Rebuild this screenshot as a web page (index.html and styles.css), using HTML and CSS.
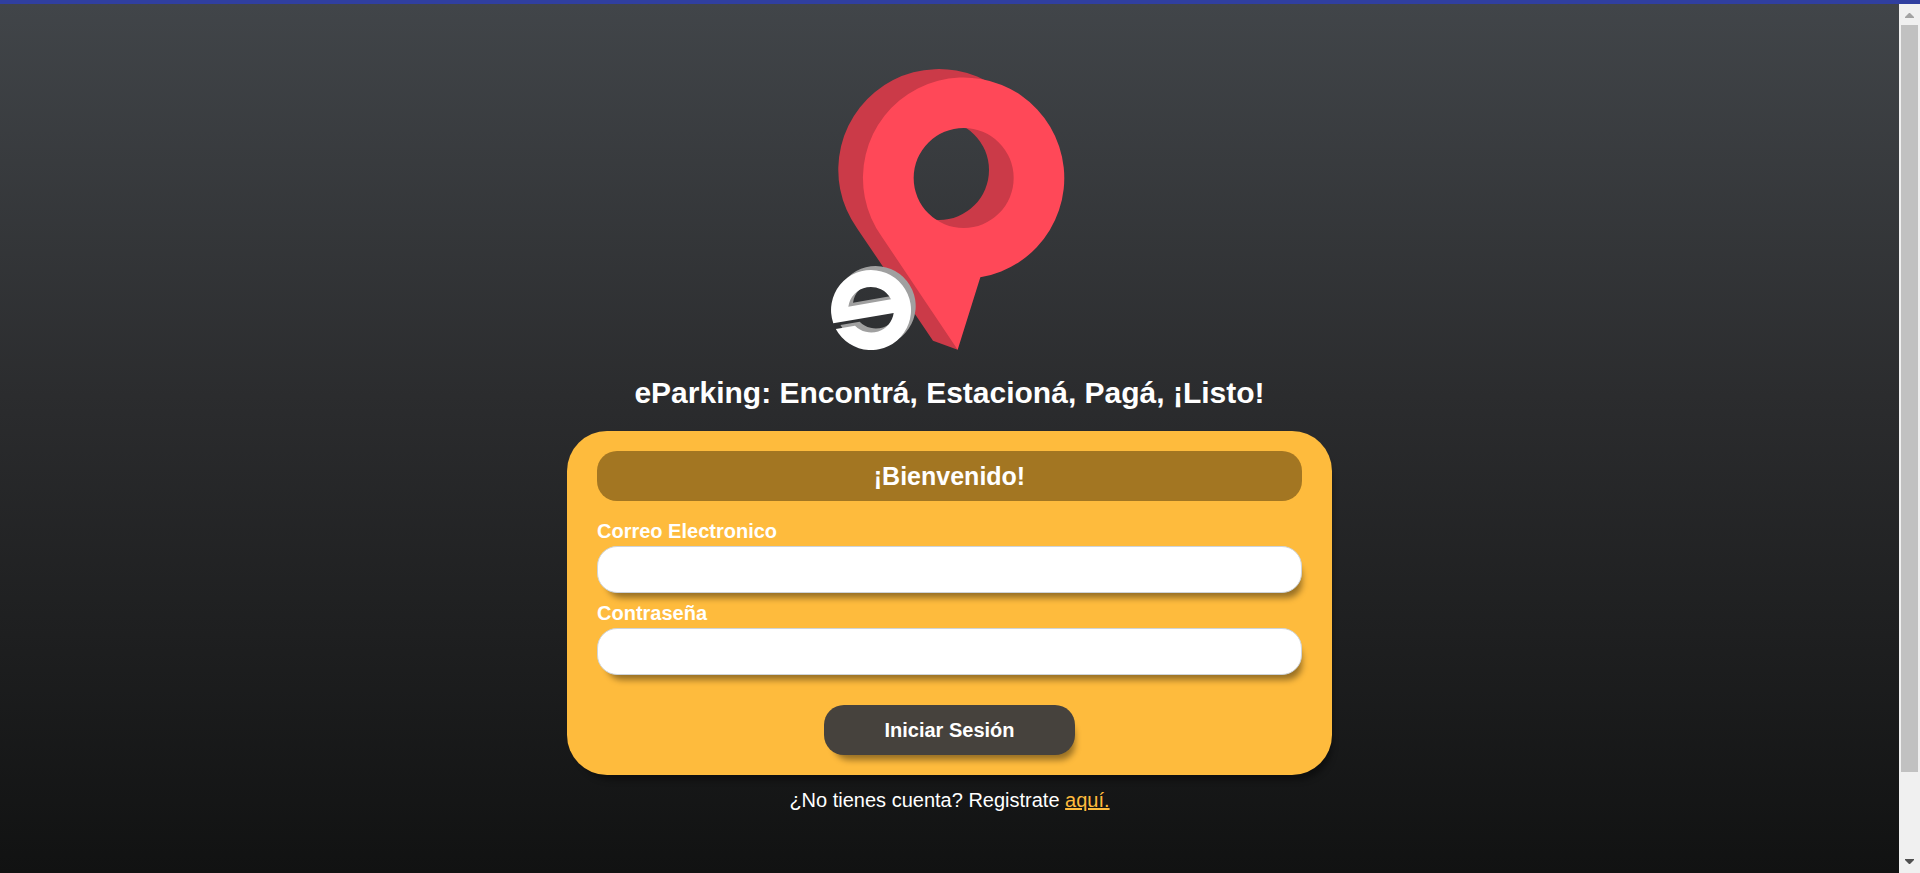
FILE: index.html
```html
<!DOCTYPE html>
<html lang="es">
<head>
<meta charset="utf-8">
<meta name="viewport" content="width=device-width, initial-scale=1">
<title>eParking</title>
<link rel="stylesheet" href="styles.css">
</head>
<body>
<div class="viewport">
  <main class="page">
    <svg class="logo" viewBox="33 27 711 843" role="img" aria-label="eParking">
      <path fill="#cb3a48" fill-rule="evenodd" d="M112 506A302 302 0 1 1 407 627L413 869L339 842ZM207 330a150 150 0 1 0 300 0a150 150 0 1 0-300 0Z"/>
      <path fill="#ff4858" fill-rule="evenodd" d="M186 531A302 302 0 1 1 481 652L413 869ZM281 354a150 150 0 1 0 300 0a150 150 0 1 0-300 0Z"/>
      <path fill="#a0a0a0" fill-rule="evenodd" d="M53.9 778A120 120 0 1 1 61.4 795L119 785A68 68 0 0 0 235 747ZM99 728A68 68 0 0 1 227 706Z"/>
      <path fill="#fff" fill-rule="evenodd" d="M39.9 790A120 120 0 1 1 47.4 807L105 797A68 68 0 0 0 221 759ZM85 740A68 68 0 0 1 213 718Z"/>
    </svg>
    <h1 class="slogan">eParking: Encontrá, Estacioná, Pagá, ¡Listo!</h1>
    <form class="card">
      <h2 class="welcome">¡Bienvenido!</h2>
      <label class="label" for="email">Correo Electronico</label>
      <input class="field" id="email" type="email">
      <label class="label" for="password">Contraseña</label>
      <input class="field" id="password" type="password">
      <button class="submit" type="submit">Iniciar Sesión</button>
    </form>
    <p class="signup">¿No tienes cuenta? Registrate <a class="link" href="#">aquí.</a></p>
  </main>
  <div class="scrollbar" aria-hidden="true">
    <svg class="arrow" viewBox="0 0 9 5"><path fill="#a3a3a3" d="M4 0h1l4 4v1H0V4z"/></svg>
    <div class="thumb"></div>
    <svg class="arrow" viewBox="0 0 9 5"><path fill="#505050" d="M0 0h9v1L5 5H4L0 1z"/></svg>
  </div>
</div>
</body>
</html>
```
FILE: styles.css
```css
* {
  box-sizing: border-box;
}

body {
  margin: 0;
  font-family: "Liberation Sans", Arial, sans-serif;
  font-size: 20px;
  color: #fff;
}

.viewport {
  display: flex;
  min-height: 100vh;
  border-top: 4px solid #303f9f;
}

.page {
  flex: 1;
  display: flex;
  flex-direction: column;
  align-items: center;
  padding: 65px 20px 20px;
  background: linear-gradient(#414549, #2b2c2e 45%, #111212);
}

.logo {
  display: block;
  width: 237px;
  height: 281px;
}

.slogan {
  margin: 24px 0 20px;
  font-size: 30px;
  line-height: 37px;
}

.card {
  display: flex;
  flex-direction: column;
  width: 100%;
  max-width: 765px;
  padding: 20px 30px;
  border-radius: 40px;
  background: #febb3d;
  box-shadow: 5px 10px 6px -5px rgba(0, 0, 0, 0.4);
}

.welcome {
  margin: 0 0 15px;
  border-radius: 20px;
  background: #a37622;
  font-size: 25px;
  line-height: 50px;
  text-align: center;
}

.label {
  font-weight: bold;
  line-height: 30px;
}

.field {
  width: 100%;
  height: 47px;
  margin-bottom: 5px;
  padding: 8px 16px;
  border: 1px solid #ced4da;
  border-radius: 20px;
  background: #fff;
  font: inherit;
  box-shadow: 5px 10px 6px -5px rgba(0, 0, 0, 0.4);
}

.submit {
  align-self: center;
  height: 50px;
  margin-top: 25px;
  padding: 0 60px;
  border: 0;
  border-radius: 20px;
  background: #46423d;
  color: #fff;
  font: inherit;
  font-weight: bold;
  box-shadow: 5px 10px 6px -5px rgba(0, 0, 0, 0.4);
}

.signup {
  margin: 10px 0 0;
  line-height: 30px;
}

.link {
  color: #febb3d;
}

.scrollbar {
  display: flex;
  flex-direction: column;
  align-items: center;
  width: 21px;
  padding: 9px 2px;
  background: #f0f0f0;
}

.arrow {
  width: 9px;
  height: 5px;
}

.thumb {
  flex: 1;
  width: 17px;
  margin: 7px 0 87px;
  background: #c1c1c1;
}
```
